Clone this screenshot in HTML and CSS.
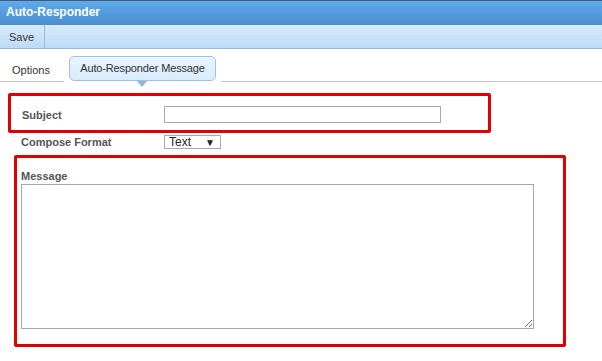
FILE: index.html
```html
<!DOCTYPE html>
<html lang="en">

<head>
  <meta charset="UTF-8" />
  <title>Auto-Responder</title>
  <link rel="stylesheet" href="styles.css">
</head>

<body>
  <div class="titlebar">Auto-Responder</div>

  <div class="toolbar">
    <button class="tool-btn" type="button">Save</button>
  </div>

  <div class="tabs">
    <span class="tab">Options</span>
    <span class="tab-active-wrap">
      <span class="tab tab-active">Auto-Responder Message</span>
    </span>
  </div>

  <form class="form">
    <div class="row row-subject">
      <label class="label" for="subject">Subject</label>
      <input class="text-input" type="text" id="subject" />
    </div>

    <div class="row row-format">
      <span class="label">Compose Format</span>
      <div class="select">
        <span>Text</span>
        <span class="select-arrow">&#9660;</span>
      </div>
    </div>

    <label class="label label-message" for="message">Message</label>
    <textarea class="message" id="message"></textarea>
  </form>

  <!-- annotation boxes -->
  <div class="mark mark-subject"></div>
  <div class="mark mark-message"></div>
</body>

</html>
```

FILE: styles.css
```css
* {
  margin: 0;
  padding: 0;
  box-sizing: border-box;
  font-family: 'Liberation Sans', Arial, sans-serif;
}

body {
  background-color: #fff;
  color: #333;
  font-size: 11px;
  position: relative;
  height: 361px;
  overflow: hidden;
}

.titlebar {
  height: 25px;
  border-top: 1px solid #46586b;
  background: linear-gradient(to bottom, #5eaaec, #4a8ecf);
  color: #fff;
  font-size: 12px;
  font-weight: bold;
  line-height: 23px;
  padding-left: 6px;
}

.toolbar {
  height: 24px;
  background: linear-gradient(to bottom, #d8eafb, #bcdbf7);
  border-bottom: 1px solid #98bade;
  display: flex;
}

.tool-btn {
  border: none;
  border-right: 1px solid #9cb9d6;
  background: transparent;
  font-size: 11px;
  color: #333;
  padding: 0 8px 0 9px;
  width: 45px;
  text-align: left;
  cursor: pointer;
}

.tabs {
  height: 33px;
  border-bottom: 1px solid #c6c6c6;
  display: flex;
  align-items: flex-end;
}

.tab {
  font-size: 11px;
  color: #333;
  width: 64px;
  padding: 0 0 5px 12px;
}

.tab-active-wrap {
  background: #fff;
  padding: 0 5px;
  margin-bottom: -1px;
  height: 26px;
  position: relative;
}

.tab-active {
  display: block;
  width: 147px;
  height: 25px;
  line-height: 23px;
  padding: 0;
  text-align: center;
  letter-spacing: -0.15px;
  border: 1px solid #9ec2e2;
  border-radius: 5px;
  background: linear-gradient(to bottom, #eaf4fd, #d9ebfb);
}

.tab-active-wrap::after {
  content: '';
  position: absolute;
  left: 73px;
  top: 25px;
  border-left: 5px solid transparent;
  border-right: 5px solid transparent;
  border-top: 6px solid #90b3d6;
}

.form {
  padding-left: 21px;
}

.row {
  display: flex;
  align-items: center;
}

.row-subject {
  margin-top: 24px;
}

.row-format {
  margin-top: 12px;
}

.label {
  width: 143px;
  font-size: 11px;
  font-weight: bold;
  color: #555;
}

.row-subject .label {
  padding-left: 1px;
}

.text-input {
  width: 277px;
  height: 17px;
  border: 1px solid #a9a9a9;
  font-size: 11px;
}

.select {
  width: 57px;
  height: 14px;
  border: 1px solid #a9a9a9;
  display: flex;
  justify-content: space-between;
  align-items: center;
  padding: 0 5px 0 4px;
  font-size: 12px;
  color: #222;
}

.select-arrow {
  font-size: 10px;
}

.label-message {
  display: block;
  margin-top: 21px;
  line-height: 13px;
}

.message {
  display: block;
  margin-top: 1px;
  width: 513px;
  height: 145px;
  border: 1px solid #a9a9a9;
  font-size: 11px;
}

.mark {
  position: absolute;
  border: 3px solid #e30000;
  border-radius: 2px;
  pointer-events: none;
}

.mark-subject {
  left: 8px;
  top: 93px;
  width: 483px;
  height: 40px;
}

.mark-message {
  left: 14px;
  top: 155px;
  width: 552px;
  height: 192px;
}
```
